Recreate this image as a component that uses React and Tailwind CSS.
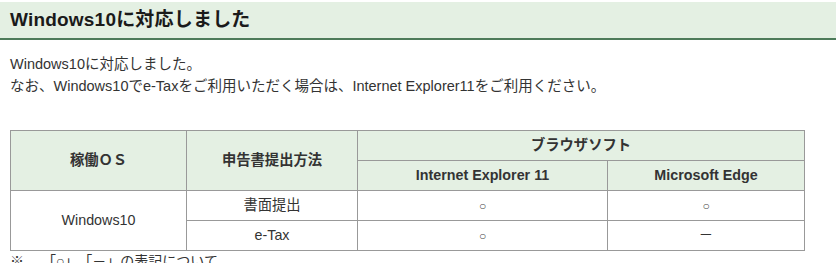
export default function App() {
  const font = { fontFamily: '"Liberation Sans", Arial, "Noto Sans CJK JP", sans-serif' };
  const th = "border border-[#999] bg-[#e4f0e3] font-bold text-center";
  const td = "border border-[#999] text-center";
  const mark = `${td} text-[12px] text-[#444]`;

  return (
    <div className="w-[839px] h-[263px] overflow-hidden bg-white text-[#222]" style={font}>
      <div className="mt-[2px] mr-[3px] h-[38px] bg-[#e4f0e3] border-b-2 border-[#4d7b5a] flex items-center pl-[10px]">
        <h1 className="text-[19px] font-bold text-[#1a1a1a] tracking-[0.2px]">Windows10に対応しました</h1>
      </div>

      <div className="px-[10px] pt-[13px] text-[14.5px] leading-[22px] text-[#333]">
        <p>Windows10に対応しました。</p>
        <p>なお、Windows10でe-Taxをご利用いただく場合は、Internet Explorer11をご利用ください。</p>
      </div>

      <table className="ml-[10px] mt-[33px] border-collapse text-[14.3px] text-[#333]">
        <thead>
          <tr className="h-[30px]">
            <th rowSpan={2} className={`${th} w-[176px]`}>稼働ＯＳ</th>
            <th rowSpan={2} className={`${th} w-[171px]`}>申告書提出方法</th>
            <th colSpan={2} className={th}>ブラウザソフト</th>
          </tr>
          <tr className="h-[30px]">
            <th className={`${th} w-[250px]`}>Internet Explorer 11</th>
            <th className={`${th} w-[197px]`}>Microsoft Edge</th>
          </tr>
        </thead>
        <tbody>
          <tr className="h-[30px]">
            <td rowSpan={2} className={td}>Windows10</td>
            <td className={td}>書面提出</td>
            <td className={mark}>○</td>
            <td className={mark}>○</td>
          </tr>
          <tr className="h-[30px]">
            <td className={td}>e-Tax</td>
            <td className={mark}>○</td>
            <td className={td}>－</td>
          </tr>
        </tbody>
      </table>

      <p className="px-[10px] text-[14px] leading-[20px] text-[#333]">※　 「○」、「－」の表記について</p>
    </div>
  );
}
